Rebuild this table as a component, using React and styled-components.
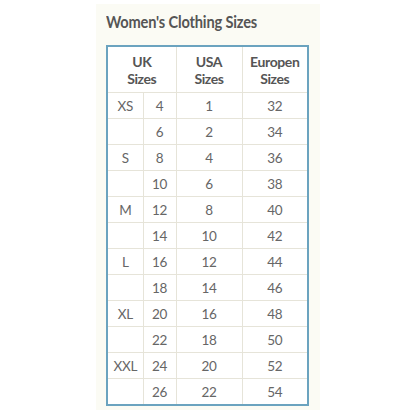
import React from "react";
import styled, { createGlobalStyle } from "styled-components";

const Global = createGlobalStyle`
  html, body { margin: 0; padding: 0; background: #ffffff; }
  body { font-family: Lato, "Open Sans", sans-serif; }
`;

const Panel = styled.div`
  margin: 4px 0 0 96px;
  width: 224px;
  height: 406px;
  background: #fbfbf4;
  box-sizing: border-box;
  padding: 8px 0 0 10px;
  display: flex;
  flex-direction: column;
  align-items: flex-start;
`;

const Title = styled.h2`
  margin: 0;
  font-family: Lato, sans-serif;
  font-weight: 700;
  font-size: 17px;
  line-height: 20px;
  color: #555555;
  letter-spacing: -0.2px;
  transform: scaleX(0.86);
  transform-origin: left center;
  white-space: nowrap;
`;

const Table = styled.table`
  margin-top: 13px;
  width: 202px;
  border-collapse: collapse;
  background: #ffffff;
  border: 2px solid #6ba3bf;
  font-family: Lato, sans-serif;
  table-layout: fixed;
`;

const Col = styled.col`
  width: ${(p) => p.$w}px;
`;

const Th = styled.th`
  border: 1px solid #e6e4d9;
  height: 45px;
  padding: 0;
  font-weight: 700;
  font-size: 14px;
  line-height: 17px;
  color: #555555;
  text-align: center;
  vertical-align: middle;
  letter-spacing: -0.4px;
`;

const Td = styled.td`
  border: 1px solid #e6e4d9;
  height: 25px;
  padding: 0;
  font-size: 13.5px;
  color: #666666;
  text-align: center;
  vertical-align: middle;
  letter-spacing: -0.3px;
`;

const rows = [
  ["XS", 4, 1, 32],
  ["", 6, 2, 34],
  ["S", 8, 4, 36],
  ["", 10, 6, 38],
  ["M", 12, 8, 40],
  ["", 14, 10, 42],
  ["L", 16, 12, 44],
  ["", 18, 14, 46],
  ["XL", 20, 16, 48],
  ["", 22, 18, 50],
  ["XXL", 24, 20, 52],
  ["", 26, 22, 54],
];

export default function App() {
  return (
    <>
      <Global />
      <Panel>
        <Title>Women's Clothing Sizes</Title>
        <Table>
          <colgroup>
            <Col $w={36} />
            <Col $w={33} />
            <Col $w={66} />
            <Col $w={66} />
          </colgroup>
          <thead>
            <tr>
              <Th colSpan={2}>UK<br />Sizes</Th>
              <Th>USA<br />Sizes</Th>
              <Th>Europen<br />Sizes</Th>
            </tr>
          </thead>
          <tbody>
            {rows.map((r, i) => (
              <tr key={i}>
                {r.map((c, j) => (
                  <Td key={j}>{c}</Td>
                ))}
              </tr>
            ))}
          </tbody>
        </Table>
      </Panel>
    </>
  );
}
